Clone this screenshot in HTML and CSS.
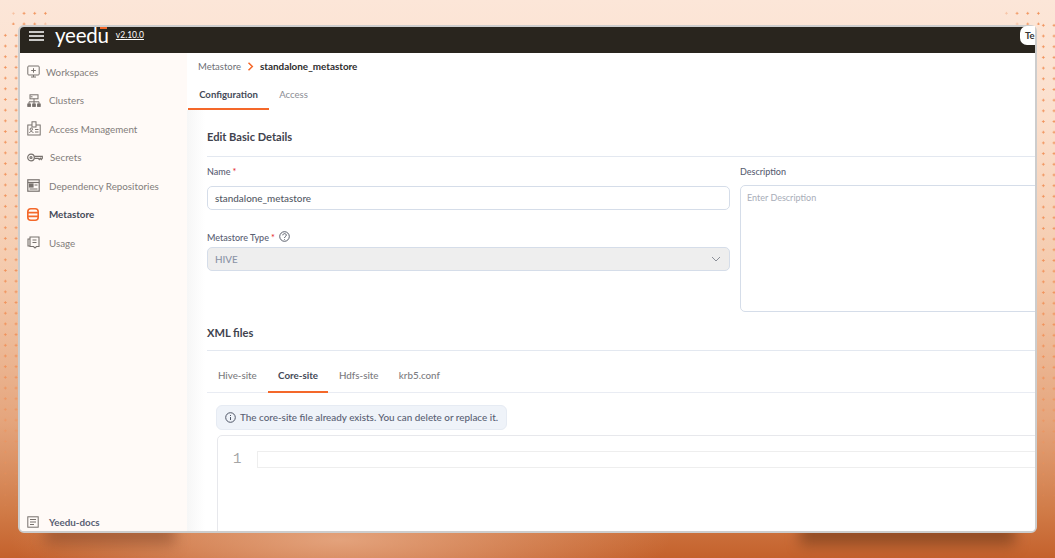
FILE: index.html
```html
<!DOCTYPE html>
<html lang="en">
<head>
    <meta charset="UTF-8">
    <title>Yeedu - Metastore</title>
    <link rel="stylesheet" href="styles.css">
</head>

<body>
    <div class="dots dots-left"></div>
    <div class="dots dots-right"></div>
    <div class="dots corner-left"></div>
    <div class="dots corner-right"></div>
    <div class="shadow shadow-left"></div>
    <div class="shadow shadow-right"></div>

    <div class="window">
        <!-- top bar -->
        <header class="topbar">
            <svg class="burger" width="15" height="10" viewBox="0 0 15 10"><path d="M0 1h15M0 5h15M0 9h15" stroke="#fff" stroke-width="1.5"/></svg>
            <span class="logo">yeedu</span>
            <span class="version">v2.10.0</span>
            <span class="user">Te</span>
        </header>

        <div class="body">
            <!-- sidebar -->
            <nav class="sidebar">
                <ul class="nav-list">
                    <li class="nav-item">
                        <svg width="13" height="13" viewBox="0 0 13 13" fill="none" stroke="#77716d"><rect x=".8" y="1" width="11.400" height="9" rx="1"/><path d="M6.500 3.200v4.500M4.200 5.500h4.600M4 12h5M6.500 10v2" /></svg>
                        <span class="ml-1">Workspaces</span>
                    </li>
                    <li class="nav-item">
                        <svg width="14" height="13" viewBox="0 0 14 13" fill="none" stroke="#77716d"><rect x="3" y=".8" width="8" height="4"/><path d="M3.500 2.800h2M7 4.800v3M2 10V7.800h10V10M7 7.800V10"/><rect x=".8" y="10" width="2.600" height="2.400" fill="#77716d"/><rect x="5.700" y="10" width="2.600" height="2.400" fill="#77716d"/><rect x="10.600" y="10" width="2.600" height="2.400" fill="#77716d"/></svg>
                        <span class="ml-2">Clusters</span>
                    </li>
                    <li class="nav-item">
                        <svg width="14" height="15" viewBox="0 0 14 15" fill="none" stroke="#77716d"><rect x=".8" y="4" width="12.400" height="10"/><rect x="5" y=".8" width="4" height="5.200" fill="#fffaf7"/><circle cx="4.300" cy="8.200" r="1.200"/><path d="M2.500 12c0-2 3.600-2 3.600 0M8 8.500h3.500M8 11h3.500"/></svg>
                        <span class="ml-2">Access Management</span>
                    </li>
                    <li class="nav-item">
                        <svg width="16" height="9" viewBox="0 0 16 9" fill="none" stroke="#77716d" stroke-width="1.200"><circle cx="4" cy="4.500" r="3.300"/><circle cx="4" cy="4.500" r="1"/><path d="M7.300 3.300h8v2l-1 1.200-1-1.200-1 1.200-1-1.200H7.300"/></svg>
                        <span class="ml-3">Secrets</span>
                    </li>
                    <li class="nav-item">
                        <svg width="13" height="13" viewBox="0 0 13 13" fill="none" stroke="#77716d" stroke-width="1.200"><rect x=".8" y=".8" width="11.400" height="11.400"/><path d="M.8 3.500h11.400"/><rect x="2.500" y="5" width="3.500" height="3" fill="#77716d"/><path d="M7.500 6h3M2.500 10h8"/></svg>
                        <span class="ml-4">Dependency Repositories</span>
                    </li>
                    <li class="nav-item active">
                        <svg width="12" height="13" viewBox="0 0 12 13" fill="none" stroke="#f4682a" stroke-width="1.600"><rect x=".8" y=".8" width="10.400" height="11.400" rx="3"/><path d="M.8 4.600h10.400M.8 8.400h10.400"/></svg>
                        <span class="ml-5">Metastore</span>
                    </li>
                    <li class="nav-item">
                        <svg width="13" height="13" viewBox="0 0 13 13" fill="none" stroke="#77716d" stroke-width="1.100"><path d="M3 1h9v9.500H9.500L8 12 6.500 10.500H3z"/><path d="M3 3H1v7h2M5.500 4h4M5.500 6.500h4"/></svg>
                        <span class="ml-4">Usage</span>
                    </li>
                </ul>
                <div class="nav-item docs">
                    <svg width="12" height="12" viewBox="0 0 12 12" fill="none" stroke="#77716d"><rect x=".8" y=".8" width="10.400" height="10.400"/><path d="M3 3.500h6M3 6h6M3 8.500h4"/></svg>
                    <span class="ml-5">Yeedu-docs</span>
                </div>
            </nav>

            <!-- main content -->
            <main class="main">
                <div class="breadcrumb">
                    <span>Metastore</span>
                    <svg width="7" height="9" viewBox="0 0 7 9" fill="none"><path d="M1.500 .8 5.300 4.500 1.500 8.200" stroke="#f4682a" stroke-width="1.500"/></svg>
                    <b>standalone_metastore</b>
                </div>

                <div class="page-tabs">
                    <span class="page-tab selected">Configuration</span>
                    <span class="page-tab">Access</span>
                </div>

                <div class="content">
                    <h2 class="section-title">Edit Basic Details</h2>
                    <div class="form-grid">
                        <div class="form-left">
                            <label class="field-label">Name <i>*</i></label>
                            <div class="input">standalone_metastore</div>
                            <label class="field-label type-label">Metastore Type <i>*</i>
                                <svg width="11" height="11" viewBox="0 0 11 11" fill="none" stroke="#4a4f5c" stroke-width=".9"><circle cx="5.500" cy="5.500" r="4.800"/><path d="M3.800 4.300c0-2.200 3.500-2.200 3.500-.1 0 1.300-1.800 1.300-1.800 2.800M5.500 8v.7"/></svg>
                            </label>
                            <div class="input select">
                                <span>HIVE</span>
                                <svg width="10" height="6" viewBox="0 0 10 6" fill="none"><path d="M1 1l4 4 4-4" stroke="#8b8f98"/></svg>
                            </div>
                        </div>
                        <div class="form-right">
                            <label class="field-label desc-label">Description</label>
                            <div class="textarea">Enter Description</div>
                        </div>
                    </div>

                    <h2 class="section-title xml-title">XML files</h2>
                    <div class="file-tabs">
                        <span class="file-tab">Hive-site</span>
                        <span class="file-tab selected">Core-site</span>
                        <span class="file-tab">Hdfs-site</span>
                        <span class="file-tab">krb5.conf</span>
                    </div>

                    <div class="notice">
                        <svg width="11" height="11" viewBox="0 0 11 11" fill="none" stroke="#4f5666"><circle cx="5.500" cy="5.500" r="4.800"/><path d="M5.500 5v3M5.500 3v1"/></svg>
                        The core-site file already exists. You can delete or replace it.
                    </div>

                    <div class="editor">
                        <span class="line-no">1</span>
                        <div class="line"></div>
                    </div>
                </div>
            </main>
        </div>
    </div>
</body>
</html>
```

FILE: styles.css
```css
* {
    box-sizing: border-box;
}

html, body {
    margin: 0;
    height: 100%;
    overflow: hidden;
}

body {
    position: relative;
    padding: 25px 18px 0;
    font-family: "Lato", "Noto Sans", sans-serif;
    background:
        radial-gradient(ellipse 330px 70px at 340px 540px, rgba(232, 172, 136, 0.85), rgba(232, 172, 136, 0) 100%),
        linear-gradient(180deg, #fce6d8 0%, #fbdfcc 22%, #f4c9ab 50%, #e5a67e 75%, #d07a46 92%, #c4612c 100%);
}

/* decorative dots */
.dots {
    position: absolute;
    background-image: radial-gradient(circle, #f09058 0.900px, transparent 1.300px);
    background-size: 10.700px 10.700px;
}

.dots-left {
    left: 0;
    top: 30px;
    bottom: 40px;
    width: 18px;
    -webkit-mask-image: linear-gradient(180deg, #000 70%, transparent 100%);
}

.dots-right {
    right: 0;
    top: 20px;
    bottom: 40px;
    width: 17px;
    -webkit-mask-image: linear-gradient(180deg, #000 70%, transparent 100%);
}

.corner-left {
    left: 8px;
    top: 8px;
    width: 46px;
    height: 17px;
    -webkit-mask-image: linear-gradient(135deg, transparent 8%, #000 30%, #000 70%, transparent 95%);
}

.corner-right {
    right: 8px;
    top: 8px;
    width: 46px;
    height: 17px;
    -webkit-mask-image: linear-gradient(45deg, transparent 15%, #000 45%);
}

/* shadow under the window */
.shadow {
    position: absolute;
    top: 520px;
    height: 25px;
    filter: blur(7px);
}

.shadow-left {
    left: 45px;
    width: 130px;
    background: rgba(130, 70, 40, 0.5);
}

.shadow-right {
    left: 800px;
    width: 215px;
    background: rgba(110, 55, 25, 0.6);
}

.window {
    position: relative;
    width: 1019px;
    height: 508px;
    border: 2.500px solid #cdcdcd;
    border-radius: 6px;
    background: #fff;
    display: flex;
    flex-direction: column;
}

/* top bar */
.topbar {
    height: 25.500px;
    flex: none;
    background: #29251e;
    border-radius: 4px 4px 0 0;
    display: flex;
    align-items: center;
    padding: 0 0 9px 9px;
    color: #fff;
}

.burger {
    margin-top: 1px;
}

.logo {
    position: relative;
    font-size: 20.500px;
    font-weight: 400;
    margin-left: 11px;
    line-height: 16px;
    letter-spacing: -0.200px;
}

.logo::after {
    content: "";
    position: absolute;
    right: 2px;
    top: 0;
    width: 7px;
    height: 1.500px;
    background: #f4682a;
}

.version {
    font-size: 8.500px;
    text-decoration: underline;
    margin-left: 7px;
}

.user {
    margin-left: auto;
    width: 15px;
    height: 19px;
    margin-top: 0;
    background: #fff;
    color: #333;
    border-radius: 7px 0 0 7px;
    font-size: 9.500px;
    line-height: 13px;
    padding: 3px 0 0 5px;
    font-weight: 700;
    white-space: nowrap;
}

.body {
    flex: 1;
    display: flex;
    min-height: 0;
}

/* sidebar */
.sidebar {
    width: 167px;
    flex: none;
    background: #fffaf7;
    border-bottom-left-radius: 4px;
    padding: 5px 0 0 7px;
    display: flex;
    flex-direction: column;
    font-size: 9.800px;
    color: #827d7b;
    position: relative;
}

.nav-list {
    list-style: none;
    margin: 0;
    padding: 0;
    flex: 1;
}

.nav-item {
    height: 28.500px;
    display: flex;
    align-items: center;
}

.nav-item svg {
    flex: none;
}

.nav-item.active {
    color: #454a58;
    font-weight: 700;
}

.ml-1 {
    margin-left: 6px;
}

.ml-2 {
    margin-left: 8px;
}

.ml-3 {
    margin-left: 7px;
}

.ml-4 {
    margin-left: 9px;
}

.ml-5 {
    margin-left: 10px;
}

.docs {
    height: 18px;
    color: #596073;
    font-weight: 700;
}

/* main */
.main {
    flex: 1;
    min-width: 0;
    overflow: hidden;
    border-bottom-right-radius: 4px;
}

.breadcrumb {
    height: 27px;
    display: flex;
    align-items: center;
    gap: 6px;
    padding-left: 11px;
    font-size: 9.500px;
    color: #6d6f76;
}

.breadcrumb b {
    color: #2e2e2e;
    font-weight: 700;
    font-size: 9.900px;
}

.page-tabs {
    display: flex;
    height: 30px;
    padding-left: 1px;
    font-size: 9.600px;
}

.page-tab {
    width: 81px;
    padding-top: 9px;
    text-align: center;
    color: #8a8d94;
}

.page-tab + .page-tab {
    width: 49px;
}

.page-tab.selected {
    color: #454a58;
    font-weight: 700;
    border-bottom: 2px solid #f4682a;
}

.content {
    width: 1000px;
    padding-left: 20px;
    background: linear-gradient(90deg, #f6f6f6, #fff 18px);
}

.section-title {
    margin: 0;
    font-size: 11.100px;
    font-weight: 700;
    color: #3f434e;
    height: 47px;
    padding-top: 20px;
    border-bottom: 1px solid #e3e8f0;
}

.form-grid {
    display: grid;
    grid-template-columns: 523px 1fr;
    column-gap: 10px;
}

.field-label {
    display: flex;
    align-items: center;
    gap: 2px;
    height: 29px;
    padding-top: 1px;
    font-size: 9px;
    font-weight: 500;
    color: #596073;
}

.field-label i {
    color: #e3242b;
    font-style: normal;
}

.field-label svg {
    margin: -2px 0 0 2px;
}

.desc-label {
    height: 28px;
}

.input {
    height: 24.500px;
    border: 1px solid #d5dde9;
    border-radius: 5px;
    padding: 0 7px;
    display: flex;
    align-items: center;
    font-size: 9.900px;
    font-weight: 500;
    color: #555a66;
}

.type-label {
    height: 26px;
    margin-top: 11.500px;
    padding-top: 5px;
}

.select {
    background: #eeeeee;
    justify-content: space-between;
    color: #8a93a6;
    padding-right: 8px;
    margin-top: -1px;
}

.textarea {
    height: 127px;
    border: 1px solid #d5dde9;
    border-radius: 5px;
    padding: 6px;
    font-size: 9px;
    color: #a8adb8;
    margin-right: -20px;
}

.xml-title {
    height: 39px;
    padding-top: 14px;
}

.file-tabs {
    display: flex;
    height: 42px;
    font-size: 9.800px;
    color: #7b7b80;
    border-bottom: 1px solid #e9ecf3;
}

.file-tab {
    width: 60.700px;
    padding-top: 18px;
    text-align: center;
    font-weight: 500;
}

.file-tab.selected {
    color: #454a58;
    font-weight: 700;
    border-bottom: 2px solid #f4682a;
    height: 42px;
}

.notice {
    display: inline-flex;
    align-items: center;
    gap: 4px;
    width: 291px;
    height: 25px;
    margin: 12px 0 0 9px;
    padding-left: 8px;
    border-radius: 6px;
    background: #eff3f9;
    border: 1px solid #e6ebf3;
    font-size: 9.900px;
    font-weight: 500;
    color: #596073;
}

.editor {
    display: flex;
    width: 900px;
    height: 110px;
    margin: 5px 0 0 10px;
    padding: 15px 0 0 15px;
    border: 1.500px solid #e7e8ec;
    border-radius: 5px;
}

.line-no {
    width: 24px;
    font-family: "Liberation Mono", monospace;
    font-size: 14px;
    color: #a5a5a5;
}

.line {
    flex: 1;
    height: 17px;
    border: 1.500px solid #eeeeee;
}
```
